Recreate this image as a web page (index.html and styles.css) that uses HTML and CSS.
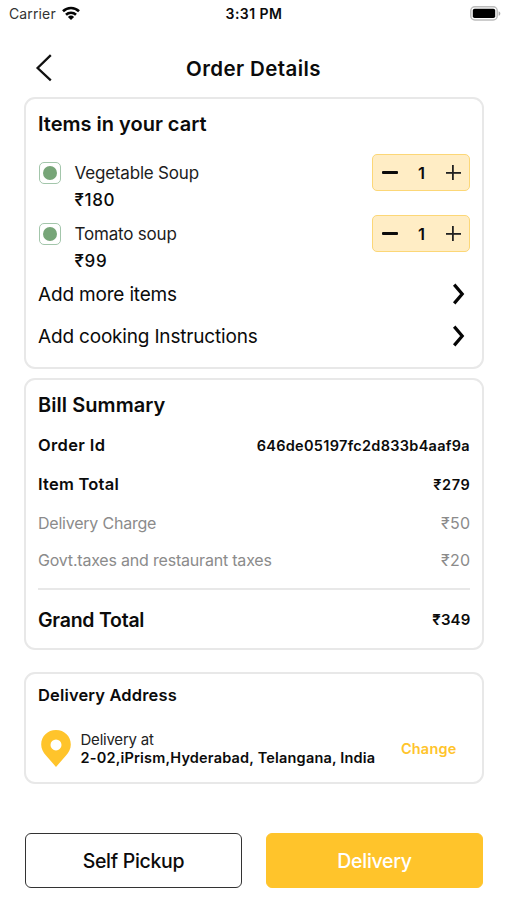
FILE: index.html
```html
<!DOCTYPE html>
<html lang="en">
<head>
<meta charset="utf-8">
<title>Order Details</title>
<link rel="stylesheet" href="styles.css">
</head>
<body>
<div class="status">
  <div class="carrier"><span>Carrier</span>
    <svg width="18" height="14" viewBox="0 0 18 14"><g fill="none" stroke="#050505" stroke-width="2.6"><path d="M1 5.3a11.5 11.5 0 0 1 16 0"/><path d="M4 8.700a7.200 7.200 0 0 1 10 0"/></g><path d="M9 14 5.900 10.900a4.500 4.500 0 0 1 6.200 0z" fill="#050505"/></svg>
  </div>
  <div class="clock">3:31 PM</div>
  <svg class="battery" width="31" height="15" viewBox="0 0 31 15"><rect x=".8" y=".8" width="26.4" height="13.2" rx="4" fill="#fff" stroke="#bcbcbc" stroke-width="1.5"/><rect x="2.8" y="2.8" width="22.4" height="9.2" rx="1.8" fill="#000"/><path d="M28.600 5.200c2.300.8 2.300 3.800 0 4.600z" fill="#aaa"/></svg>
</div>
<header class="header">
  <svg class="back" width="18" height="28" viewBox="0 0 18 28"><path d="M15.800 1.200 2.600 14l13.200 12.400" fill="none" stroke="#111" stroke-width="2.3"/></svg>
  <h1>Order Details</h1>
</header>
<main>
  <section class="card cart">
    <h2 class="cart-title">Items in your cart</h2>
    <div class="item">
      <span class="veg"></span>
      <div class="info"><div class="name">Vegetable Soup</div><div class="price">₹180</div></div>
      <div class="stepper"><i class="minus"></i><span>1</span><i class="plus"></i></div>
    </div>
    <div class="item">
      <span class="veg"></span>
      <div class="info"><div class="name">Tomato soup</div><div class="price">₹99</div></div>
      <div class="stepper"><i class="minus"></i><span>1</span><i class="plus"></i></div>
    </div>
    <div class="link"><span>Add more items</span><svg width="14" height="22" viewBox="0 0 14 22"><path d="M2.200 1.600 10.200 11 2.200 20.400" fill="none" stroke="#050505" stroke-width="3.2"/></svg></div>
    <div class="link"><span>Add cooking Instructions</span><svg width="14" height="22" viewBox="0 0 14 22"><path d="M2.200 1.600 10.200 11 2.200 20.400" fill="none" stroke="#050505" stroke-width="3.2"/></svg></div>
  </section>
  <section class="card bill">
    <h2 class="bill-title">Bill Summary</h2>
    <div class="line strong"><span class="order">Order Id</span><span class="hash">646de05197fc2d833b4aaf9a</span></div>
    <div class="line strong"><span>Item Total</span><span class="amount">₹279</span></div>
    <div class="line muted"><span>Delivery Charge</span><span class="amount">₹50</span></div>
    <div class="line muted tax"><span>Govt.taxes and restaurant taxes</span><span class="amount">₹20</span></div>
    <div class="line grand"><span>Grand Total</span><span class="amount">₹349</span></div>
  </section>
  <section class="card address">
    <h2 class="address-title">Delivery Address</h2>
    <div class="place">
      <svg width="30" height="37" viewBox="0 0 30 37"><path fill="#ffc42b" fill-rule="evenodd" d="M15 0C6.600 0 .2 6.400.2 14.400c0 4.300 1.800 7.600 4.800 11L15 37l10-11.600c3-3.400 4.800-6.700 4.800-11C29.800 6.400 23.400 0 15 0zM15 9.400a5.500 5.500 0 1 1 0 11 5.500 5.500 0 0 1 0-11z"/></svg>
      <div class="where"><div class="at">Delivery at</div><div class="street">2-02,iPrism,Hyderabad, Telangana, India</div></div>
      <a class="change">Change</a>
    </div>
  </section>
</main>
<footer class="actions">
  <button class="pickup">Self Pickup</button>
  <button class="deliver">Delivery</button>
</footer>
</body>
</html>
```
FILE: styles.css
```css
* { box-sizing: border-box; }
body {
  margin: 0;
  width: 507px;
  height: 900px;
  overflow: hidden;
  background: #fff;
  color: #0b0b0b;
  font-family: Inter, "Liberation Sans", sans-serif;
  white-space: nowrap;
}
svg { display: block; flex: none; }
h1, h2 { margin: 0; font-weight: 600; font-size: 20px; }

.status {
  display: grid;
  grid-template-columns: 1fr auto 1fr;
  align-items: center;
  height: 27px;
  padding: 0 6px 0 9px;
}
.carrier { display: flex; align-items: center; gap: 6px; font-size: 14px; letter-spacing: .13px; color: #333; }
.carrier svg { margin-top: -2px; }
.clock { margin-right: 2px; font-size: 14px; font-weight: 600; letter-spacing: .45px; }
.battery { justify-self: end; }

.header {
  display: grid;
  grid-template-columns: 1fr auto 1fr;
  align-items: center;
  height: 70px;
  padding: 12px 35px 0;
}
h1 { font-size: 20.5px; letter-spacing: .4px; }

main { padding: 0 23px 0 24px; }
.card { border: 2px solid #e8e8e8; border-radius: 11px; padding: 0 12px; }

.cart { height: 272px; }
.cart-title { height: 55px; line-height: 51px; letter-spacing: 0; }
.item { display: flex; height: 58px; margin-bottom: 3px; }
.item + .link { margin-top: -3px; }
.veg {
  display: grid;
  place-items: center;
  width: 22px;
  height: 22px;
  margin: 7.5px 13.500px 0 1px;
  border: 1.5px solid #a3c6ab;
  border-radius: 5px;
}
.veg::after { content: ""; width: 14px; height: 14px; border-radius: 50%; background: #77a578; }
.info { flex: 1; padding-top: 6px; font-size: 17px; line-height: 26px; color: #1c1c1c; }
.name { letter-spacing: -.19px; }
.price { font-weight: 500; letter-spacing: .65px; line-height: 28px; color: #0b0b0b; }
.stepper {
  display: grid;
  grid-template-columns: 16px 1fr 16px;
  align-items: center;
  justify-items: center;
  width: 98px;
  height: 37px;
  padding: 0 8px 0 9px;
  border: 1.5px solid #fcd777;
  border-radius: 5px;
  background: #ffedc5;
  font-size: 16.5px;
  font-weight: 600;
}
.minus { width: 16px; height: 3px; border-radius: 1px; background: #0b0b0b; }
.plus {
  width: 15px;
  height: 15px;
  background:
    linear-gradient(#222, #222) center / 15px 1.8px no-repeat,
    linear-gradient(#222, #222) center / 1.8px 15px no-repeat;
}
.link { display: flex; align-items: center; justify-content: space-between; height: 42px; font-size: 19px; letter-spacing: -.18px; }
.link svg { margin-right: 4px; }

.bill { height: 272px; margin-top: 9px; }
.bill-title { height: 46px; line-height: 50px; letter-spacing: .06px; }
.line { display: flex; align-items: center; justify-content: space-between; height: 38px; }
.strong { height: 39px; padding-bottom: 1px; font-size: 16.5px; font-weight: 600; letter-spacing: .24px; }
.order { letter-spacing: .35px; }
.hash { font-size: 14.5px; letter-spacing: .3px; }
.amount { margin-right: -.5px; letter-spacing: .35px; }
.strong .amount { font-size: 14.5px; letter-spacing: .65px; }
.muted { padding-bottom: 1px; font-size: 16px; letter-spacing: -.22px; color: #8b8b8b; }
.tax { height: 37px; letter-spacing: -.2px; }
.grand { height: 66px; margin-top: 9px; padding-bottom: 5px; border-top: 2px solid #e8e8e8; font-size: 19.5px; font-weight: 600; letter-spacing: -.24px; }
.grand .amount { font-size: 15px; letter-spacing: .15px; }

.address { height: 112px; margin-top: 22px; }
.address-title { line-height: 43px; font-size: 16.5px; letter-spacing: .15px; }
.place { display: flex; align-items: center; padding: 13px 13.5px 0 3px; }
.where { flex: 1; margin-left: 9.5px; line-height: 17.5px; }
.at { font-size: 15px; letter-spacing: -.22px; color: #222; }
.street { font-size: 14.5px; font-weight: 600; letter-spacing: .19px; }
.change { color: #ffc42b; font-size: 14.5px; font-weight: 600; letter-spacing: .2px; }

.actions { display: flex; gap: 24px; margin-top: 49px; padding: 0 24px 0 25px; }
button { flex: 1; height: 55px; padding: 0; border: 1.5px solid #333; border-radius: 6px; background: #fff; color: #0b0b0b; font: 500 19.5px Inter, sans-serif; letter-spacing: -.3px; }
.deliver { border-color: #ffc42b; background: #ffc42b; color: #fff; }
```
